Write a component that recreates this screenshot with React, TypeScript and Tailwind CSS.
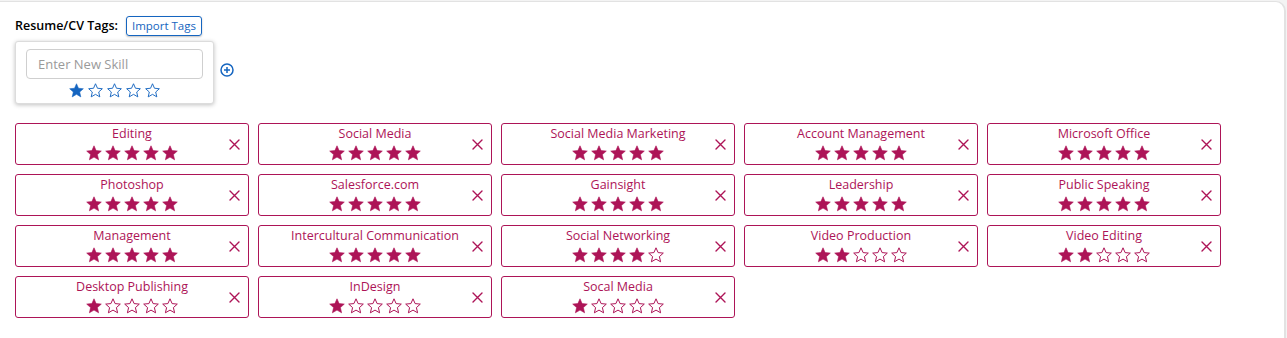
import { useState } from 'react';

type Skill = { name: string; rating: number };

const skills: Skill[] = [
  { name: 'Editing', rating: 5 },
  { name: 'Social Media', rating: 5 },
  { name: 'Social Media Marketing', rating: 5 },
  { name: 'Account Management', rating: 5 },
  { name: 'Microsoft Office', rating: 5 },
  { name: 'Photoshop', rating: 5 },
  { name: 'Salesforce.com', rating: 5 },
  { name: 'Gainsight', rating: 5 },
  { name: 'Leadership', rating: 5 },
  { name: 'Public Speaking', rating: 5 },
  { name: 'Management', rating: 5 },
  { name: 'Intercultural Communication', rating: 5 },
  { name: 'Social Networking', rating: 4 },
  { name: 'Video Production', rating: 2 },
  { name: 'Video Editing', rating: 2 },
  { name: 'Desktop Publishing', rating: 1 },
  { name: 'InDesign', rating: 1 },
  { name: 'Socal Media', rating: 1 },
];

const STAR = '8,0.8 10.1,5.6 15.3,6.1 11.4,9.6 12.6,14.8 8,12.1 3.4,14.8 4.6,9.6 0.7,6.1 5.9,5.6';

function Star({ filled, color, size }: { filled: boolean; color: string; size: number }) {
  return (
    <svg width={size} height={size} viewBox="0 0 16 16" className="block">
      <polygon
        points={STAR}
        fill={filled ? color : 'white'}
        stroke={color}
        strokeWidth={filled ? 0.6 : 1}
        strokeLinejoin="round"
      />
    </svg>
  );
}

function Stars({ rating, color, size, gap }: { rating: number; color: string; size: number; gap: string }) {
  return (
    <div className={`flex justify-center ${gap}`}>
      {[1, 2, 3, 4, 5].map((i) => (
        <Star key={i} filled={i <= rating} color={color} size={size} />
      ))}
    </div>
  );
}

function SkillTag({ skill }: { skill: Skill }) {
  return (
    <div className="relative h-[42px] w-[234px] rounded-[3px] border border-[#ad1457] pt-[2px] text-center">
      <p className="text-[12.5px] leading-[16px] text-[#ad1457]">{skill.name}</p>
      <div className="mt-[3px]">
        <Stars rating={skill.rating} color="#ad1457" size={16} gap="gap-[3px]" />
      </div>
      <button className="absolute right-[8px] top-[15px] text-[#ad1457]">
        <svg width="11" height="11" viewBox="0 0 11 11">
          <path d="M1 1 L10 10 M10 1 L1 10" stroke="currentColor" strokeWidth="1.4" strokeLinecap="round" />
        </svg>
      </button>
    </div>
  );
}

export default function App() {
  const [skill, setSkill] = useState('');

  return (
    <div className="h-[338px] w-[1287px] bg-[#f3f3f3] pt-px" style={{ fontFamily: '"Open Sans", "Liberation Sans", sans-serif' }}>
      <div className="h-[337px] w-[1286px] rounded-tr-[10px] border-r-2 border-t border-[#e2e2e2] bg-white px-[15px] pt-[14px]">
        <div className="flex items-center gap-[8px]">
          <span className="text-[12.5px] font-semibold text-black">Resume/CV Tags:</span>
          <button className="h-[20px] rounded-[3px] border border-[#1565c0] px-[5px] text-[11.5px] leading-[18px] text-[#1565c0] shadow-[0_1px_2px_rgba(0,0,0,0.25)]">
            Import Tags
          </button>
        </div>

        <div className="mt-[5px] flex items-center gap-[6px]">
          <div className="h-[63px] w-[199px] rounded-[3px] border border-[#dcdcdc] bg-white px-[10px] pt-[7px] shadow-[0_1px_4px_rgba(0,0,0,0.25)]">
            <input
              value={skill}
              onChange={(e) => setSkill(e.target.value)}
              placeholder="Enter New Skill"
              className="h-[30px] w-[177px] rounded-[4px] border border-[#cfcfcf] px-[11px] text-[13px] text-gray-700 placeholder:text-[#9a9a9a] focus:outline-none"
            />
            <div className="mt-[4px]">
              <Stars rating={1} color="#1565c0" size={15} gap="gap-[4px]" />
            </div>
          </div>
          <button className="mb-[5px] text-[#1565c0]">
            <svg width="14" height="14" viewBox="0 0 14 14">
              <circle cx="7" cy="7" r="6" fill="none" stroke="currentColor" strokeWidth="1.5" />
              <path d="M7 4 V10 M4 7 H10" stroke="currentColor" strokeWidth="1.5" />
            </svg>
          </button>
        </div>

        <div className="mt-[19px] grid w-fit grid-cols-[repeat(5,234px)] gap-x-[9px] gap-y-[9px]">
          {skills.map((s) => (
            <SkillTag key={s.name} skill={s} />
          ))}
        </div>
      </div>
    </div>
  );
}
